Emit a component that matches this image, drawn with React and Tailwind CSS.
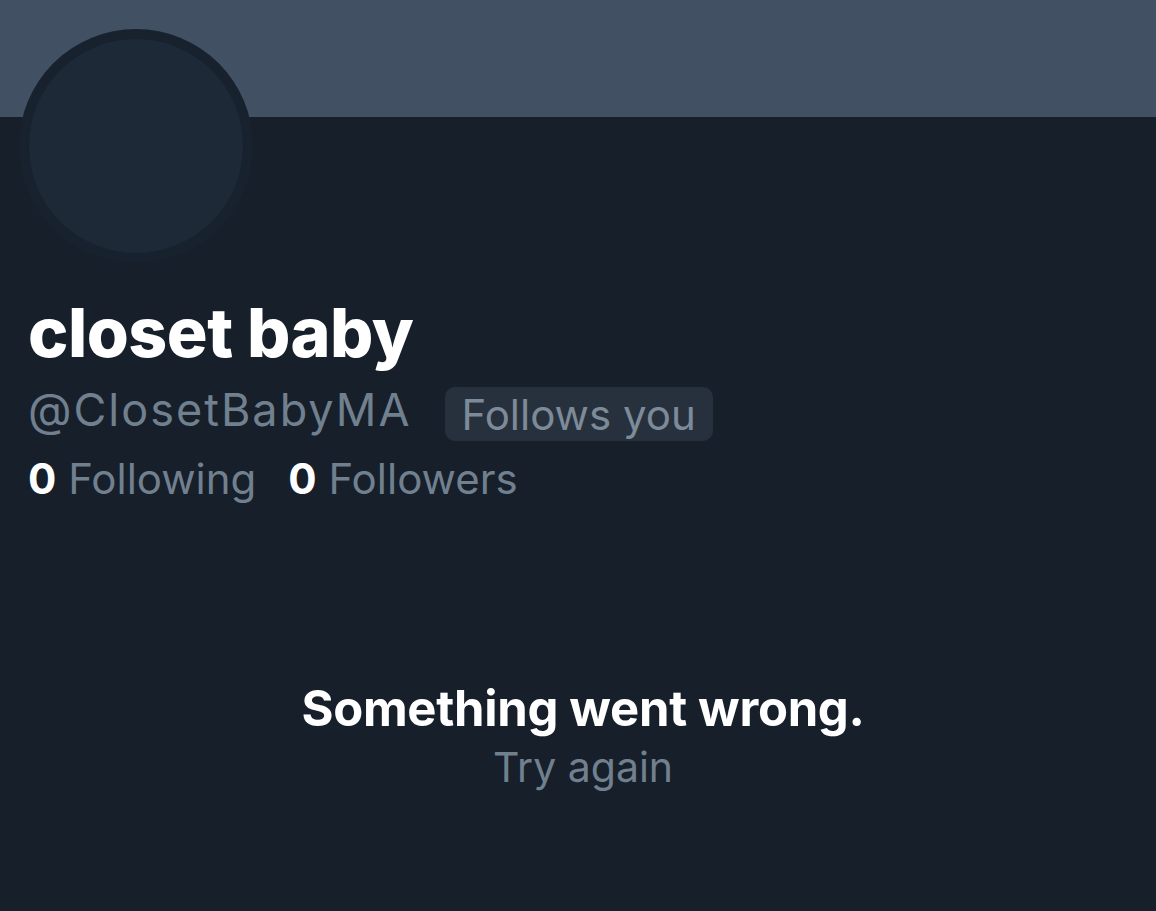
export default function App() {
  return (
    <div className="w-[1156px] h-[911px] bg-[#171f2a] overflow-hidden flex flex-col" style={{ fontFamily: "Inter, 'Liberation Sans', sans-serif" }}>
      <div className="h-[117px] bg-[#415163] shrink-0" />
      <div className="px-[19px] -mt-[88px] flex">
        <div className="w-[234px] h-[234px] rounded-full bg-[#18222f] p-[10px]">
          <div className="w-full h-full rounded-full bg-[#1e2938]" />
        </div>
      </div>
      <div className="px-[28px] mt-[33px] flex flex-col">
        <div className="text-white font-extrabold text-[68px] leading-[72px] tracking-[-0.5px]">closet baby</div>
        <div className="flex items-start mt-[15px] gap-[33px]">
          <span className="text-[#71808f] text-[45px] leading-[54px] tracking-[2px]">@ClosetBabyMA</span>
          <span className="mt-[4px] bg-[#27313e] rounded-[10px] px-[17px] h-[54px] flex items-center text-[#7d8a98] text-[42px]">Follows you</span>
        </div>
        <div className="flex items-center mt-[11px] gap-[32px] text-[42px] leading-[54px]">
          <span><span className="text-white font-bold">0</span> <span className="text-[#71808f]">Following</span></span>
          <span><span className="text-white font-bold">0</span> <span className="text-[#71808f]">Followers</span></span>
        </div>
      </div>
      <div className="flex flex-col items-center mt-[173px] pl-[10px]">
        <div className="text-white font-bold text-[49px] leading-[60px] tracking-[-0.3px]">Something went wrong.</div>
        <div className="mt-[3px] text-[#71808f] text-[41px] leading-[50px]">Try again</div>
      </div>
    </div>
  );
}
